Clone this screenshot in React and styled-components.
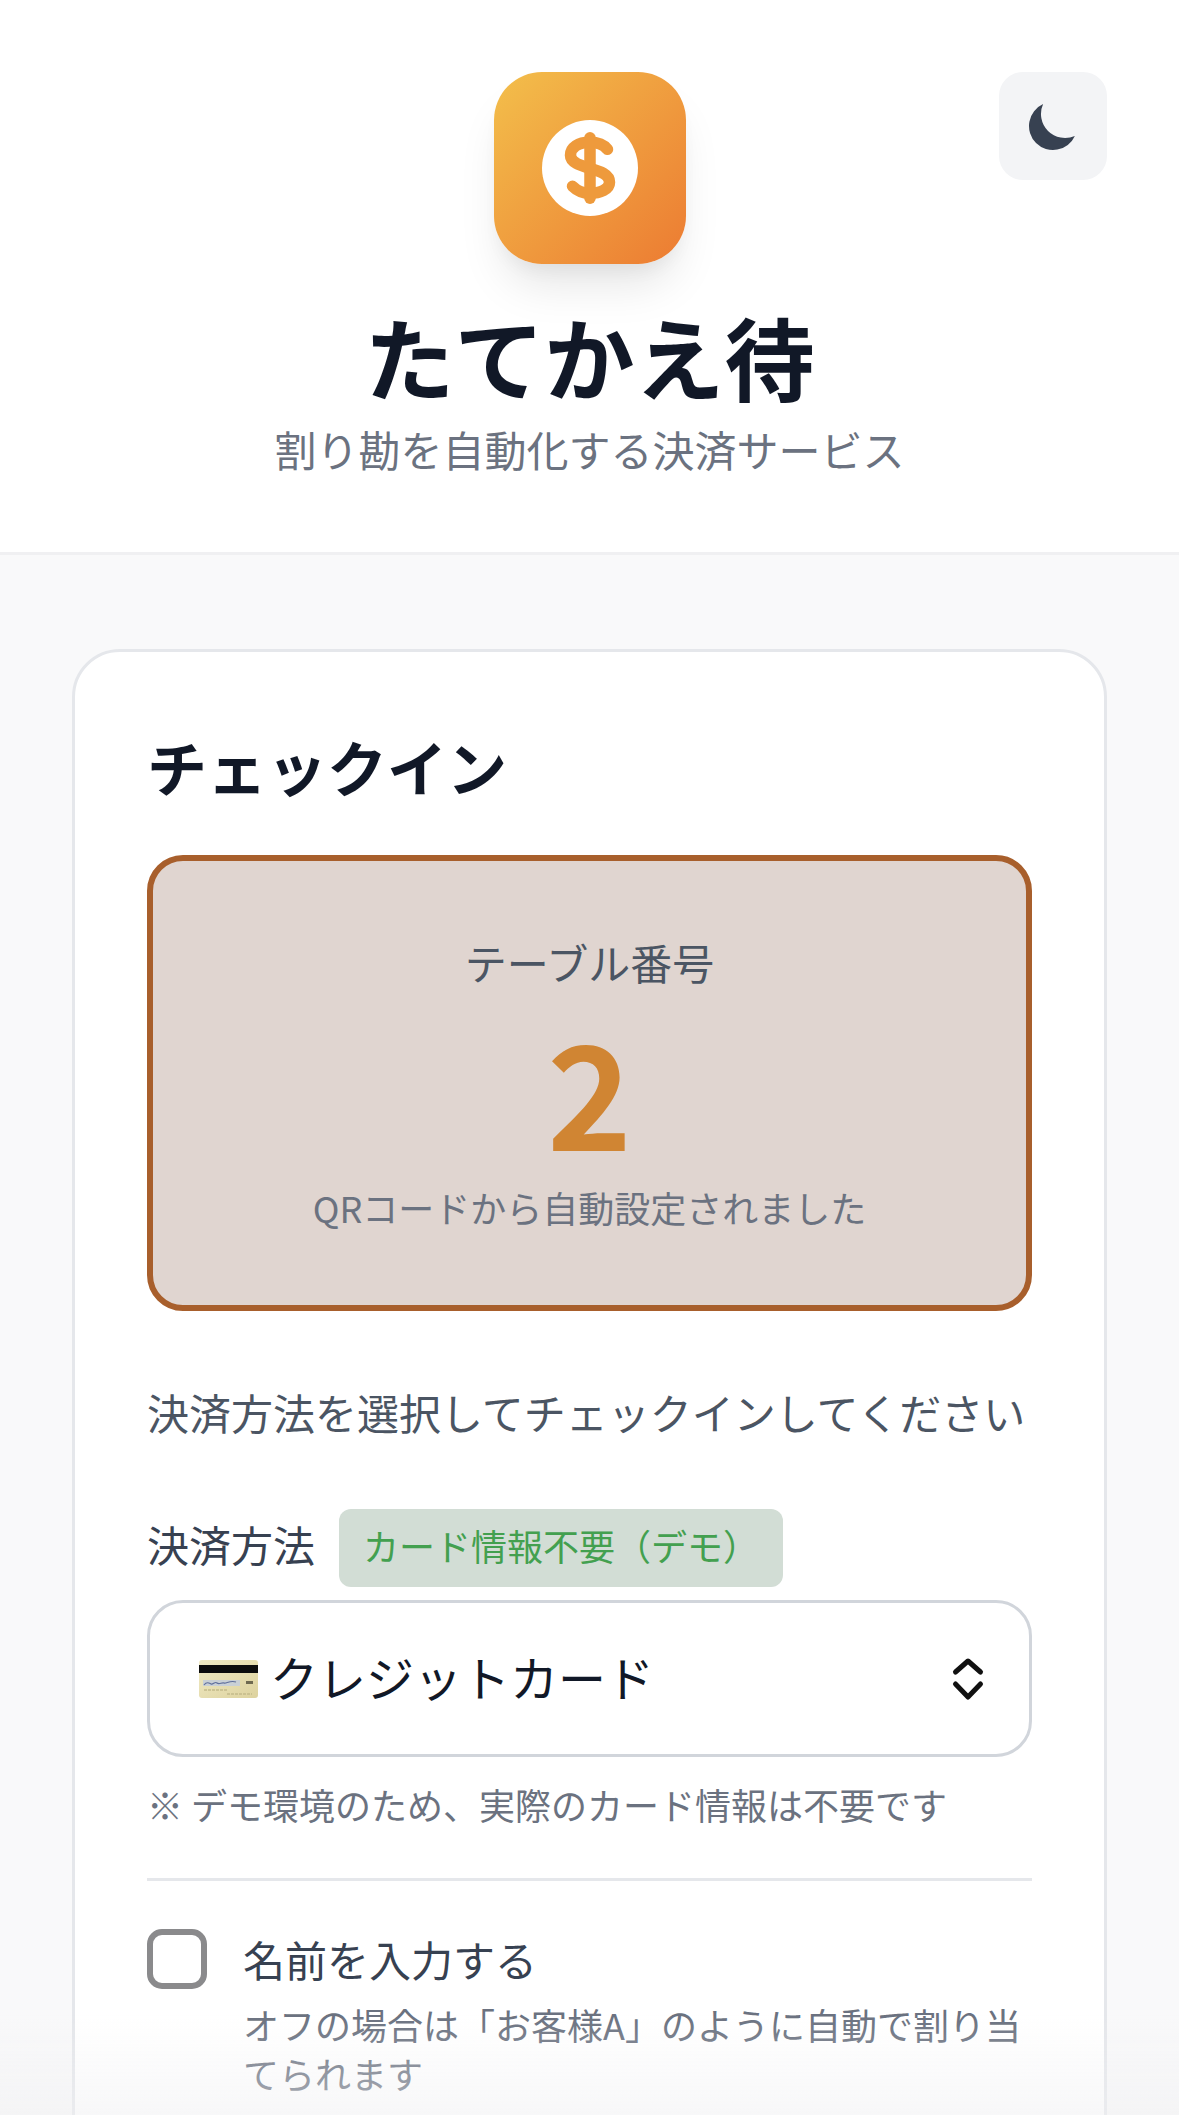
import React from "react";
import styled, { createGlobalStyle } from "styled-components";

const GlobalStyle = createGlobalStyle`
  html, body {
    margin: 0;
    padding: 0;
    background: #f9f9fa;
  }
  body {
    width: 1179px;
    height: 2115px;
    overflow: hidden;
    font-family: "Noto Sans CJK JP", "Noto Sans", sans-serif;
  }
`;

const MoonIcon = () => (
  <svg width="60" height="60" viewBox="0 0 20 20" fill="#374151">
    <path d="M17.293 13.293A8 8 0 016.707 2.707a8.001 8.001 0 1010.586 10.586z" />
  </svg>
);

const CoinIcon = () => (
  <svg width="96" height="96" viewBox="12.500 9.700 96 96">
    <circle cx="60.500" cy="57.700" r="48" fill="#fff" />
    <g fill="none" stroke="#ee9a3c" strokeWidth="11.500" strokeLinecap="round">
      <path d="M78 39C74 34 67 32 60 32C49 32 41 37 41 45C41 52 50 55 60 58C71 61 80 64 80 72C80 79 71 83 60 83C53 83 47 80 43 76" />
      <path d="M60.500 27.500V88" />
    </g>
  </svg>
);

const CardEmoji = () => (
  <svg width="59" height="38" viewBox="0 0 59 38">
    <defs>
      <linearGradient id="gold" x1="0" y1="0" x2="1" y2="1">
        <stop offset="0" stopColor="#f0eac4" />
        <stop offset="1" stopColor="#ddd29e" />
      </linearGradient>
    </defs>
    <rect width="59" height="38" rx="3" fill="url(#gold)" />
    <rect y="5" width="59" height="8" fill="#0c0c0c" />
    <rect x="4" y="20" width="37" height="6" fill="#c9d0d6" />
    <path d="M5 25c3-4 5-2 7-1s4-3 6-1 5-1 7 0 6-3 12-1" fill="none" stroke="#5f6f9c" strokeWidth="1.2" />
    <rect x="47" y="21" width="7" height="3" fill="#6f6a50" />
    <path d="M5 30h24M28 34h25" stroke="#c4ba8a" strokeWidth="1.6" strokeDasharray="3 1" />
  </svg>
);

const Chevrons = () => (
  <svg width="34" height="44" viewBox="0 0 34 44" fill="none" stroke="#111" strokeWidth="5" strokeLinecap="round" strokeLinejoin="round">
    <path d="M4.5 15L17 4L29.500 15" />
    <path d="M4.500 27L17 40L29.500 27" />
  </svg>
);

export default function App() {
  return (
    <>
      <GlobalStyle />
      <Header>
        <Logo>
          <CoinIcon />
        </Logo>
        <Title>たてかえ待</Title>
        <Subtitle>割り勘を自動化する決済サービス</Subtitle>
        <ThemeButton aria-label="テーマ切替">
          <MoonIcon />
        </ThemeButton>
      </Header>
      <Main>
        <Card>
          <Heading>チェックイン</Heading>
          <TableBox>
            <TableLabel>テーブル番号</TableLabel>
            <TableNumber>2</TableNumber>
            <TableNote>QRコードから自動設定されました</TableNote>
          </TableBox>
          <Lead>決済方法を選択してチェックインしてください</Lead>
          <LabelRow>
            <FieldLabel>決済方法</FieldLabel>
            <Badge>カード情報不要（デモ）</Badge>
          </LabelRow>
          <Select>
            <SelectValue>
              <CardEmoji />
              <span>クレジットカード</span>
            </SelectValue>
            <Chevrons />
          </Select>
          <Note>※ デモ環境のため、実際のカード情報は不要です</Note>
          <Divider />
          <CheckRow>
            <CheckBox />
            <CheckText>
              <CheckLabel>名前を入力する</CheckLabel>
              <CheckHint>オフの場合は「お客様A」のように自動で割り当てられます</CheckHint>
            </CheckText>
          </CheckRow>
        </Card>
      </Main>
      <BottomFade />
    </>
  );
}

// Styles //
const Header = styled.header`
  position: relative;
  box-sizing: border-box;
  height: 555px;
  padding-top: 72px;
  display: flex;
  flex-direction: column;
  align-items: center;
  background: #fff;
  border-bottom: 3px solid #f0f0f2;
`;
const Logo = styled.div`
  width: 192px;
  height: 192px;
  flex: none;
  display: flex;
  align-items: center;
  justify-content: center;
  border-radius: 48px;
  background: linear-gradient(135deg, #f3bf4b, #ec7b32);
  box-shadow: 0 30px 45px -9px rgba(0, 0, 0, 0.1), 0 12px 18px -6px rgba(0, 0, 0, 0.05);
`;
const Title = styled.h1`
  margin: 37px 0 0;
  font-size: 90px;
  line-height: 108px;
  font-weight: 700;
  color: #111827;
`;
const Subtitle = styled.p`
  margin: 8px 0 0;
  font-size: 42px;
  line-height: 63px;
  color: #6b7280;
`;
const ThemeButton = styled.button`
  position: absolute;
  top: 72px;
  right: 72px;
  width: 108px;
  height: 108px;
  padding: 0;
  border: none;
  border-radius: 24px;
  background: #f3f4f6;
  display: flex;
  align-items: center;
  justify-content: center;
`;
const Main = styled.main`
  padding: 94px 72px 0;
`;
const Card = styled.section`
  padding: 69px 72px 72px;
  background: #fff;
  border: 3px solid #e5e7eb;
  border-radius: 48px;
`;
const Heading = styled.h2`
  margin: 0 0 44px;
  font-size: 60px;
  line-height: 90px;
  font-weight: 700;
  color: #111827;
`;
const TableBox = styled.div`
  box-sizing: border-box;
  height: 456px;
  padding-top: 69px;
  display: flex;
  flex-direction: column;
  align-items: center;
  background: #e0d5d0;
  border: 6px solid #a85f2c;
  border-radius: 36px;
`;
const TableLabel = styled.div`
  font-size: 42px;
  line-height: 63px;
  color: #4b5563;
`;
const TableNumber = styled.div`
  margin-top: 23px;
  font-size: 144px;
  line-height: 144px;
  font-weight: 700;
  color: #d08533;
`;
const TableNote = styled.div`
  margin-top: 20px;
  font-size: 36px;
  line-height: 54px;
  color: #6b7280;
`;
const Lead = styled.p`
  margin: 69px 0 0;
  font-size: 42px;
  line-height: 63px;
  color: #4b5563;
`;
const LabelRow = styled.div`
  margin-top: 66px;
  display: flex;
  align-items: center;
  gap: 24px;
`;
const FieldLabel = styled.span`
  padding-bottom: 9px;
  font-size: 42px;
  line-height: 63px;
  color: #374151;
`;
const Badge = styled.span`
  box-sizing: border-box;
  height: 78px;
  padding: 0 24px 6px;
  display: flex;
  align-items: center;
  font-size: 36px;
  color: #43a04f;
  background: #d2ddd5;
  border-radius: 12px;
`;
const Select = styled.div`
  box-sizing: border-box;
  height: 157px;
  margin-top: 13px;
  padding: 0 44px 0 49px;
  display: flex;
  align-items: center;
  justify-content: space-between;
  background: #fff;
  border: 3px solid #d1d5db;
  border-radius: 36px;
`;
const SelectValue = styled.div`
  display: flex;
  align-items: center;
  gap: 12px;
  font-size: 48px;
  color: #111827;
  span {
    padding-bottom: 5px;
  }
`;
const Note = styled.p`
  margin: 20px 0 0;
  font-size: 36px;
  line-height: 54px;
  color: #6b7280;
`;
const Divider = styled.hr`
  margin: 47px 0 0;
  height: 3px;
  border: none;
  background: #e5e7eb;
`;
const CheckRow = styled.div`
  margin-top: 48px;
  display: flex;
  align-items: flex-start;
  gap: 36px;
`;
const CheckBox = styled.span`
  box-sizing: border-box;
  flex: none;
  width: 60px;
  height: 60px;
  background: #fff;
  border: 6px solid #8a8a8c;
  border-radius: 15px;
`;
const CheckText = styled.div`
  margin-top: -2px;
  display: flex;
  flex-direction: column;
`;
const CheckLabel = styled.span`
  font-size: 42px;
  line-height: 63px;
  color: #374151;
`;
const CheckHint = styled.span`
  margin-top: 10px;
  font-size: 36px;
  line-height: 49px;
  color: #6b7280;
`;
const BottomFade = styled.div`
  position: fixed;
  left: 0;
  right: 0;
  bottom: 0;
  height: 100px;
  pointer-events: none;
  background: linear-gradient(rgba(240, 240, 242, 0), rgba(240, 240, 242, 0.5));
`;
